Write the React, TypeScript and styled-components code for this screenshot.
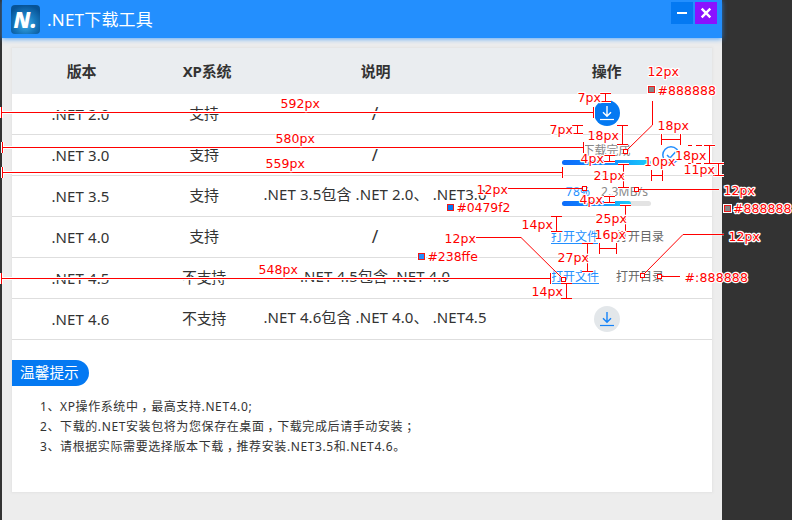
import React from 'react';
import styled, { createGlobalStyle } from 'styled-components';

const GlobalStyle = createGlobalStyle`
  * { box-sizing: border-box; }
  html, body { margin: 0; padding: 0; background: #333; }
  body { overflow: hidden; }
`;

const Stage = styled.div`
  position: relative;
  width: 792px;
  height: 520px;
  padding-left: 2px;
  overflow: hidden;
  background: #333;
  color: #333;
  font-family: 'Noto Sans', 'Noto Sans CJK SC', sans-serif;
`;

const Window = styled.div`
  width: 720px;
  height: 520px;
  background: #ededed;
`;

const TitleBar = styled.header`
  display: flex;
  align-items: flex-start;
  height: 38px;
  padding: 2px 5px 0 9px;
  background: #238ffe;
  box-shadow: 0 1px 5px rgba(35, 143, 254, 0.75);
`;

const Logo = styled.svg`
  width: 29px;
  height: 29px;
  margin-top: 3px;
`;

const Title = styled.h1`
  flex: 1;
  margin: 0 0 0 7px;
  font-size: 17px;
  line-height: 35px;
  font-weight: 400;
  letter-spacing: 0.2px;
  color: #fff;
`;

const WindowButton = styled.button<{ $color: string }>`
  display: block;
  width: 22px;
  height: 22px;
  margin: 0 0 0 2px;
  padding: 0;
  border: 0;
  background: ${(p) => p.$color};
  svg { display: block; }
`;

const Card = styled.main`
  width: 700px;
  height: 444px;
  margin: 10px 0 0 10px;
  background: #fff;
  box-shadow: 0 0 2px 1px #e3e3e3;
`;

const Row = styled.div`
  display: grid;
  grid-template-columns: 137px 112px 228px 223px;
  height: 41px;
  border-bottom: 1px solid #dedede;
  font-size: 15px;
  line-height: 40px;
  letter-spacing: 0.1px;
`;

const HeadRow = styled(Row)`
  height: 46px;
  border-bottom: 0;
  background: #eaedf0;
  font-weight: 700;
  line-height: 46px;
  letter-spacing: -0.2px;
`;

const Cell = styled.div<{ $shift?: number; $lift?: number }>`
  height: 100%;
  margin-top: ${(p) => -(p.$lift ?? 0)}px;
  padding-left: ${(p) => p.$shift ?? 0}px;
  text-align: center;
  white-space: nowrap;
`;

const CjkCell = styled(Cell)`
  padding-right: 2px;
  letter-spacing: -0.3px;
`;

const SlashCell = styled(Cell)`
  font-size: 17.5px;
`;

const Actions = styled.div<{ $top: number }>`
  padding: ${(p) => p.$top}px 0 0 12px;
  font-size: 12px;
  line-height: 16px;
  letter-spacing: 0;
`;

const RoundButton = styled.button<{ $active?: boolean }>`
  display: block;
  width: 26px;
  height: 26px;
  margin: 0 auto;
  padding: 0;
  border: 0;
  border-radius: 50%;
  background: ${(p) => (p.$active ? '#0479f2' : '#e3e7ea')};
  color: ${(p) => (p.$active ? '#fff' : '#1683f8')};
  svg { display: block; }
`;

const Progress = styled.div`
  display: grid;
  grid-template-columns: 89px 18px;
  column-gap: 11px;
  padding-left: 61px;
`;

const Status = styled.div`
  height: 17px;
  color: #888;
  text-align: center;
`;

const Speed = styled(Status)`
  display: flex;
  gap: 10px;
  padding-left: 3px;
  letter-spacing: 0.2px;
`;

const Percent = styled.span`
  width: 26px;
  color: #238ffe;
`;

const Track = styled.div`
  height: 5px;
  border-radius: 3px;
  background: #e3e3e3;
`;

const Fill = styled.div<{ $value: number }>`
  width: ${(p) => p.$value}%;
  height: 5px;
  border-radius: 3px;
  background: linear-gradient(90deg, #0c6cfb, #1488fc 50%, #18cdfb);
`;

const CheckIcon = styled.svg`
  display: block;
  width: 18px;
  height: 18px;
  margin-top: 3px;
`;

const Links = styled.div`
  display: flex;
  gap: 17px;
  padding-left: 50px;
`;

const FileLink = styled.a<{ $primary?: boolean }>`
  height: 15px;
  color: ${(p) => (p.$primary ? '#238ffe' : '#666')};
  border-bottom: ${(p) => (p.$primary ? '1px solid #238ffe' : '0')};
`;

const Badge = styled.h2`
  width: 77px;
  height: 26px;
  margin: 20px 0 0;
  padding-left: 8px;
  border-radius: 0 13px 13px 0;
  background: #0479f2;
  color: #fff;
  font-size: 14.7px;
  line-height: 25px;
  font-weight: 400;
`;

const Notes = styled.div`
  padding: 11px 0 0 28px;
  font-size: 12px;
  line-height: 20px;
  letter-spacing: 0.6px;
  white-space: nowrap;
`;

const Note = styled.div``;

const Mark = styled.span`
  margin: 0 -3px 0 3px;
`;

const Overlay = styled.svg`
  position: absolute;
  left: 0;
  top: 0;
  width: 792px;
  height: 520px;
  pointer-events: none;
`;

const DownloadGlyph = () => (
  <svg width="26" height="26" viewBox="0 0 26 26" fill="none" stroke="currentColor">
    <path d="M13 6v10M9 12.2l4 4 4-4" strokeWidth="1.4" />
    <path d="M6 19.5h14" strokeWidth="1.2" />
  </svg>
);

const FileLinks = () => (
  <Links>
    <FileLink $primary>打开文件</FileLink>
    <FileLink>打开目录</FileLink>
  </Links>
);

type Version = { name: string; xp: string; note: string; top: number; action: React.ReactNode };

const versions: Version[] = [
  {
    name: '.NET 2.0', xp: '支持', note: '/', top: 6,
    action: <RoundButton $active><DownloadGlyph /></RoundButton>,
  },
  {
    name: '.NET 3.0', xp: '支持', note: '/', top: 8,
    action: (
      <Progress>
        <div>
          <Status>下载完成</Status>
          <Track><Fill $value={100} /></Track>
        </div>
        <CheckIcon viewBox="0 0 18 18" fill="none" stroke="#238ffe" strokeWidth="1.5">
          <circle cx="9" cy="9" r="8.2" />
          <path d="M5 9l3 3 5.5-6" />
        </CheckIcon>
      </Progress>
    ),
  },
  {
    name: '.NET 3.5', xp: '支持', note: '.NET 3.5包含 .NET 2.0、 .NET3.0', top: 8,
    action: (
      <Progress>
        <div>
          <Speed><Percent>78%</Percent><span>2.3MB/s</span></Speed>
          <Track><Fill $value={78} /></Track>
        </div>
      </Progress>
    ),
  },
  { name: '.NET 4.0', xp: '支持', note: '/', top: 12, action: <FileLinks /> },
  { name: '.NET 4.5', xp: '不支持', note: '.NET 4.5包含 .NET 4.0', top: 11, action: <FileLinks /> },
  {
    name: '.NET 4.6', xp: '不支持', note: '.NET 4.6包含 .NET 4.0、 .NET4.5', top: 7,
    action: <RoundButton><DownloadGlyph /></RoundButton>,
  },
];

/* Measurement marks: [text, left, baseline, width] */
const labels: [string, number, number, number][] = [
  ['592px', 280, 108, 39.5],
  ['580px', 275, 143, 39.5],
  ['559px', 265, 168, 39.5],
  ['548px', 258, 274, 39.5],
  ['12px', 476, 194, 31.5],
  ['#0479f2', 456, 212, 54],
  ['14px', 521, 229, 31.5],
  ['12px', 444, 243, 31.5],
  ['#238ffe', 427, 261, 50.5],
  ['7px', 577, 102, 23.5],
  ['12px', 647, 76, 31.5],
  ['#888888', 657, 95, 58.5],
  ['18px', 657, 130, 31.5],
  ['7px', 549, 134, 23.5],
  ['18px', 587, 140, 31.5],
  ['10px', 643.5, 166, 31.5],
  ['18px', 674.5, 160, 31.5],
  ['11px', 683, 174, 31.5],
  ['4px', 580, 163, 23.5],
  ['4px', 579, 204, 23.5],
  ['21px', 593, 180, 31.5],
  ['12px', 723, 195, 31.5],
  ['#888888', 732.5, 213, 58.5],
  ['25px', 595, 223, 31.5],
  ['16px', 594, 239, 31.5],
  ['12px', 728, 241, 31.5],
  ['27px', 557, 262, 31.5],
  ['#:888888', 684, 282, 63.5],
  ['14px', 531, 296, 31.5],
];

/* Horizontal spans: [x1, x2, y]; vertical spans: [x, y1, y2] */
const acrossSpans = [
  [1, 593, 112], [2, 583, 147], [2, 562, 172], [1, 550, 278],
  [661, 680, 139], [651, 662, 175], [599, 616, 248],
];
const downSpans = [
  [605, 93, 101], [577, 125, 133], [622, 125, 144], [609, 155, 161], [609, 196, 202],
  [623, 164, 187], [709, 145, 163], [718, 163, 175], [625, 205, 231], [556, 216, 231],
  [587, 243, 271], [566, 283, 298],
];
const leaders = [
  'M652.5 101V125L627 150',
  'M508 188.5H582',
  'M639 189.5H719',
  'M476 237.5H521L562 278',
  'M724 234.5H683L645 273',
  'M662 276.5H680',
  'M688 145.5h4M696 145.5h6M688 163.5h4M696 163.5h5M704 163.5h6',
];
const targets = [[623, 149], [582, 186], [634, 187], [561, 277], [640, 273], [657, 274]];
const swatches: [number, number, string][] = [
  [447, 204, '#0479f2'], [418, 253, '#238ffe'], [648, 86, '#888888'], [724, 205, '#888888'],
];

const marks = [
  ...acrossSpans.map(([a, b, y]) => `M${a} ${y + 0.5}H${b + 1}M${a + 0.5} ${y - 5}v11M${b + 0.5} ${y - 5}v11`),
  ...downSpans.map(([x, a, b]) => `M${x + 0.5} ${a}V${b + 1}M${x - 5} ${a + 0.5}h11M${x - 5} ${b + 0.5}h11`),
].join('');

const Measurements = () => (
  <Overlay viewBox="0 0 792 520">
    <g fill="none">
      <path d={marks} stroke="#fff" strokeWidth="3" />
      <path d={leaders.slice(0, 6).join('')} stroke="#fff" strokeWidth="2" strokeOpacity=".6" />
      <path d={marks} stroke="#f00" />
      <path d={leaders.join('')} stroke="#f00" />
      {targets.map(([x, y]) => (
        <rect key={`${x}-${y}`} x={x + 0.5} y={y + 0.5} width="4" height="4" fill="#fff" stroke="#f00" />
      ))}
    </g>
    {swatches.map(([x, y, color]) => (
      <g key={`${x}-${y}`}>
        <rect x={x - 1} y={y - 1} width="9" height="9" fill="#fff" />
        <rect x={x + 0.5} y={y + 0.5} width="6" height="6" fill={color} stroke="#f01818" />
      </g>
    ))}
    <g
      fill="#f00" stroke="#fff" strokeWidth="2.4" strokeLinejoin="round" paintOrder="stroke"
      fontFamily="'DejaVu Sans', sans-serif" fontSize="12.5"
    >
      {labels.map(([text, x, y, width]) => (
        <text key={`${x}-${y}`} x={x + 0.4} y={y} textLength={width}>{text}</text>
      ))}
    </g>
  </Overlay>
);

export default function App() {
  return (
    <>
      <GlobalStyle />
      <Stage>
        <Window>
          <TitleBar>
            <Logo viewBox="0 0 29 29">
              <defs>
                <radialGradient id="glow" cx="50%" cy="65%" r="65%">
                  <stop offset="0" stopColor="#3fb0ea" />
                  <stop offset=".55" stopColor="#1878bd" />
                  <stop offset="1" stopColor="#075396" />
                </radialGradient>
              </defs>
              <rect width="29" height="29" rx="4" fill="url(#glow)" />
              <text
                x="2.5" y="22.8" fill="#fff"
                fontFamily="'Open Sans', sans-serif" fontWeight="800" fontStyle="italic" fontSize="23.5"
                textLength="23.5" lengthAdjust="spacingAndGlyphs"
              >
                N.
              </text>
            </Logo>
            <Title>.NET下载工具</Title>
            <WindowButton $color="#0479f2" aria-label="最小化">
              <svg width="22" height="22" viewBox="0 0 22 22"><path d="M6 11h10" stroke="#fff" strokeWidth="2" /></svg>
            </WindowButton>
            <WindowButton $color="#8a12ff" aria-label="关闭">
              <svg width="22" height="22" viewBox="0 0 22 22"><path d="M6.7 6.7l8.6 8.6M15.3 6.7l-8.6 8.6" stroke="#fff" strokeWidth="2.4" /></svg>
            </WindowButton>
          </TitleBar>
          <Card>
            <HeadRow>
              <Cell $shift={2}>版本</Cell>
              <Cell $shift={4}>XP系统</Cell>
              <Cell $shift={1}>说明</Cell>
              <Cell $shift={12}>操作</Cell>
            </HeadRow>
            {versions.map((v) => (
              <Row key={v.name}>
                <Cell>{v.name}</Cell>
                <CjkCell $lift={1}>{v.xp}</CjkCell>
                {v.note === '/' ? <SlashCell $lift={1}>/</SlashCell> : <Cell $lift={2}>{v.note}</Cell>}
                <Actions $top={v.top}>{v.action}</Actions>
              </Row>
            ))}
            <Badge>温馨提示</Badge>
            <Notes>
              <Note>1、XP操作系统中<Mark>，</Mark>最高支持.NET4.0;</Note>
              <Note>2、下载的.NET安装包将为您保存在桌面<Mark>，</Mark>下载完成后请手动安装<Mark>；</Mark></Note>
              <Note>3、请根据实际需要选择版本下载<Mark>，</Mark>推荐安装.NET3.5和.NET4.6。</Note>
            </Notes>
          </Card>
        </Window>
        <Measurements />
      </Stage>
    </>
  );
}
